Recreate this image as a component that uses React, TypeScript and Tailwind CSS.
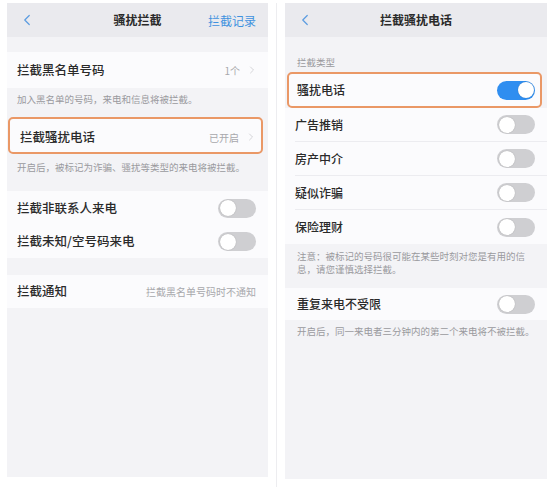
import { ChevronLeft, ChevronRight } from "lucide-react";

const font = { fontFamily: '"Noto Sans CJK SC", "Noto Sans", sans-serif' };

const Toggle = ({ on = false }: { on?: boolean }) => (
  <div
    className={`w-[38px] h-[19px] rounded-full p-[1.5px] flex ${
      on ? "bg-[#2f8ef0] justify-end" : "bg-[#cfcfd2] justify-start"
    }`}
  >
    <div className="w-[16px] h-[16px] rounded-full bg-white shadow-[0_0_1px_rgba(0,0,0,0.3)]" />
  </div>
);

const Header = ({ title, right }: { title: string; right?: string }) => (
  <div className="h-[34px] bg-[#eaeaee] relative flex items-center justify-center shrink-0">
    <ChevronLeft
      className="absolute left-[11px] top-[8px] text-[#5b9ce0]"
      size={18}
      strokeWidth={1.6}
    />
    <span className="text-[12px] font-semibold text-[#2a2a2a]">{title}</span>
    {right && (
      <span className="absolute right-[12px] top-[9px] text-[12px] text-[#3f92df]">
        {right}
      </span>
    )}
  </div>
);

// 左画面の行
const Row = ({
  label,
  children,
  className = "",
}: {
  label: string;
  children?: React.ReactNode;
  className?: string;
}) => (
  <div className={`flex items-center justify-between bg-[#fbfbfd] ${className}`}>
    <span className="text-[12.5px] font-medium text-[#2a2a2a]">{label}</span>
    {children}
  </div>
);

const Hint = ({ text, className = "" }: { text: string; className?: string }) => (
  <div className={`text-[9.5px] leading-[13px] text-[#9a9a9e] ${className}`}>{text}</div>
);

const LeftScreen = () => (
  <div className="w-[261px] h-[474px] bg-[#f3f3f6] flex flex-col">
    <Header title="骚扰拦截" right="拦截记录" />
    <div className="h-[15px]" />
    <Row label="拦截黑名单号码" className="h-[36px] pl-[10px] pr-[10px]">
      <div className="flex items-center gap-[6px] text-[10px] text-[#a8a8ac]">
        <span>1个</span>
        <ChevronRight size={12} strokeWidth={1.4} className="text-[#c4c4c8]" />
      </div>
    </Row>
    <Hint text="加入黑名单的号码，来电和信息将被拦截。" className="h-[29px] pl-[10px] pt-[5px]" />
    <Row
      label="拦截骚扰电话"
      className="h-[37px] ml-[1px] mr-[5px] pl-[10px] pr-[4px] border-2 border-[#ea9866] rounded-[5px] pt-[3px]"
    >
      <div className="flex items-center gap-[6px] text-[10px] text-[#a8a8ac]">
        <span>已开启</span>
        <ChevronRight size={12} strokeWidth={1.4} className="text-[#c4c4c8]" />
      </div>
    </Row>
    <Hint
      text="开启后，被标记为诈骗、骚扰等类型的来电将被拦截。"
      className="h-[37px] pl-[10px] pt-[7px]"
    />
    <Row label="拦截非联系人来电" className="h-[34px] pl-[10px] pr-[12px]">
      <Toggle />
    </Row>
    <Row label="拦截未知/空号码来电" className="h-[33px] pl-[10px] pr-[12px]">
      <Toggle />
    </Row>
    <div className="h-[17px]" />
    <Row label="拦截通知" className="h-[33px] pl-[10px] pr-[12px]">
      <span className="text-[10px] text-[#a8a8ac]">拦截黑名单号码时不通知</span>
    </Row>
  </div>
);

const TypeRow = ({ label, on = false, last = false }: { label: string; on?: boolean; last?: boolean }) => (
  <div className="h-[34px] pl-[10px] bg-[#fbfbfd]">
    <div
      className={`h-full flex items-center justify-between pr-[12px] ${
        last ? "" : "border-b border-[#ececf0]"
      }`}
    >
      <span className="text-[12px] font-medium text-[#2a2a2a]">{label}</span>
      <Toggle on={on} />
    </div>
  </div>
);

const RightScreen = () => (
  <div className="w-[262px] h-[476px] bg-[#f3f3f6] flex flex-col">
    <Header title="拦截骚扰电话" />
    <div className="h-[35px] pl-[12px] pt-[19px] text-[9.5px] text-[#9a9a9e] leading-[13px]">拦截类型</div>
    <div className="h-[36px] ml-[2px] mr-[5px] pl-[8px] pr-[5px] flex items-center justify-between bg-[#fbfbfd] border-2 border-[#ea9866] rounded-[5px]">
      <span className="text-[12px] font-medium text-[#2a2a2a]">骚扰电话</span>
      <Toggle on />
    </div>
    <TypeRow label="广告推销" />
    <TypeRow label="房产中介" />
    <TypeRow label="疑似诈骗" />
    <TypeRow label="保险理财" last />
    <Hint
      text="注意：被标记的号码很可能在某些时刻对您是有用的信息，请您谨慎选择拦截。"
      className="h-[44px] pl-[12px] pr-[16px] pt-[6px]"
    />
    <div className="h-[32px] pl-[12px] pr-[12px] flex items-center justify-between bg-[#fbfbfd]">
      <span className="text-[12px] font-medium text-[#2a2a2a]">重复来电不受限</span>
      <Toggle />
    </div>
    <Hint text="开启后，同一来电者三分钟内的第二个来电将不被拦截。" className="pl-[12px] pt-[5px]" />
  </div>
);

export default function App() {
  return (
    <div className="w-[554px] h-[490px] bg-white flex pl-[7px] pt-[3px]" style={font}>
      <LeftScreen />
      <div className="w-[17px] flex justify-center">
        <div className="w-px h-[484px] bg-[#ededf0]" />
      </div>
      <RightScreen />
    </div>
  );
}
